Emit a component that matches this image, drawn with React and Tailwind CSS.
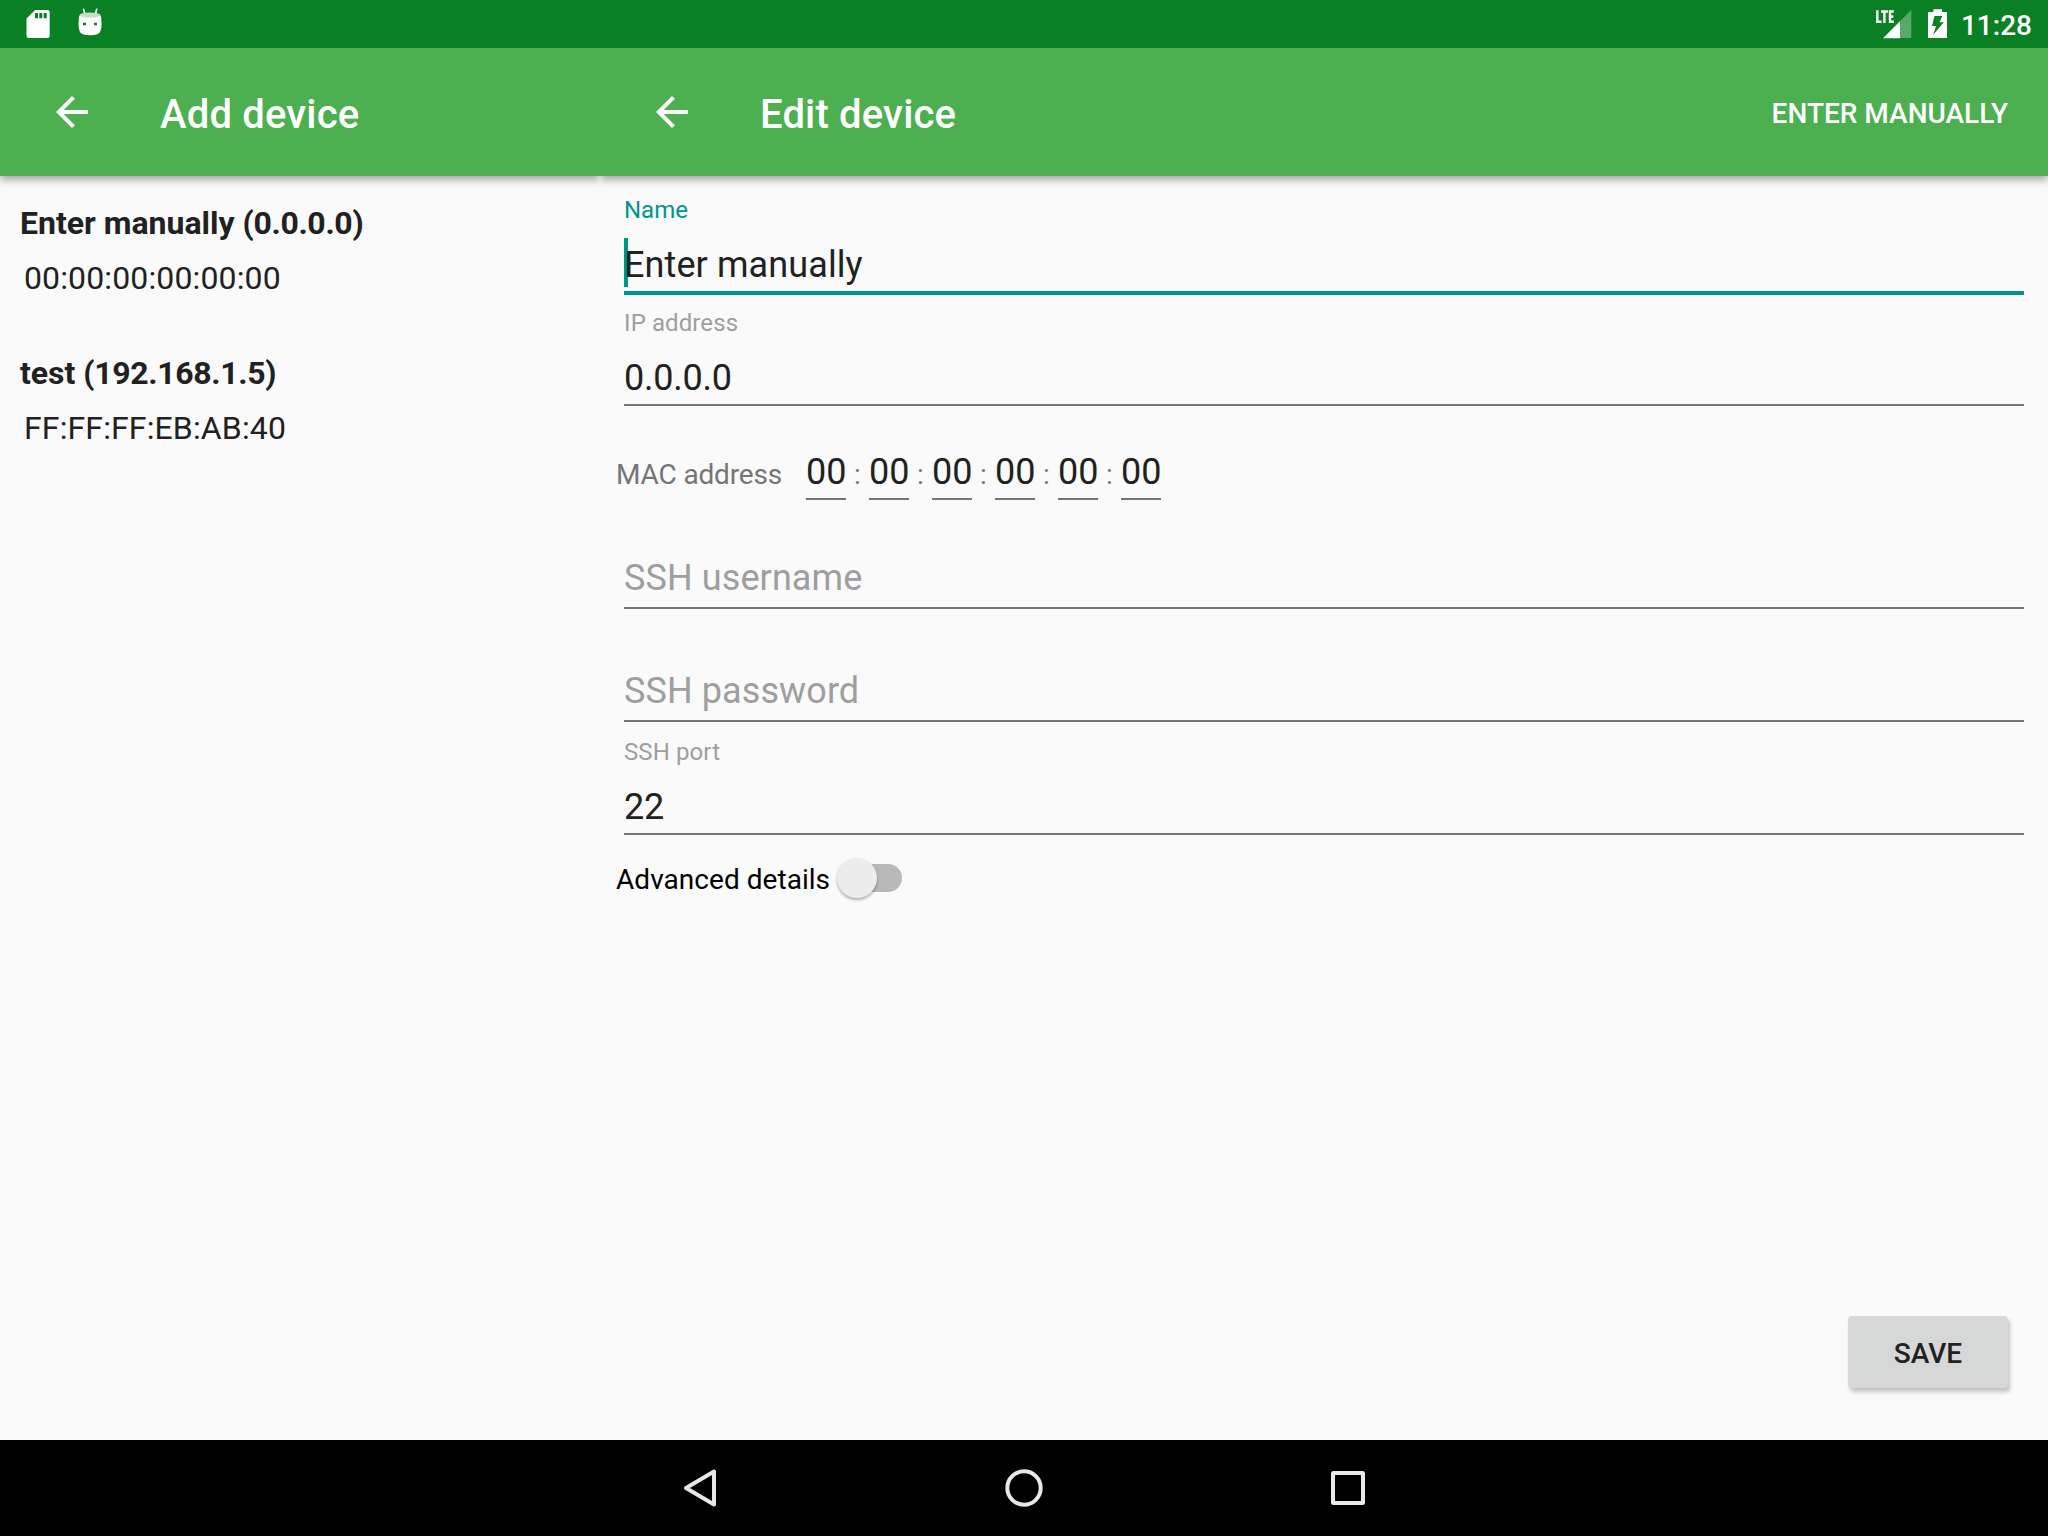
function BackArrow() {
  return (
    <svg className="size-12 shrink-0" viewBox="0 0 24 24" fill="white">
      <path d="M20 11H7.83l5.59-5.59L12 4l-8 8 8 8 1.41-1.41L7.83 13H20v-2z" />
    </svg>
  );
}

function StatusBar() {
  return (
    <div className="flex h-12 shrink-0 items-start bg-[#098024]">
      <svg className="h-12 w-[110px]" viewBox="0 0 110 48">
        <path
          fill="white"
          fillRule="evenodd"
          d="M35.2 10H47.5Q49.7 10 49.7 12.2V35.7Q49.7 38 47.5 38H28.8Q26.5 38 26.5 35.7V18.6ZM35 13V18.3H38V13ZM39.3 13V18.3H42.3V13ZM43.7 13V18.3H46.7V13Z"
        />
        <path d="M83.6 9.3L85 14.5M96.700 9.300L95.300 14.500" stroke="white" strokeWidth="1.7" strokeLinecap="round" />
        <path
          fill="white"
          fillRule="evenodd"
          d="M79.300 15.500H100.700Q101.600 19 101.600 24Q101.600 28.500 100.300 31.500Q99.200 35.200 90 35.200Q81 35.200 79.700 31.500Q78.500 28.500 78.500 24Q78.500 19 79.300 15.500ZM83 22.700V25.300H86V22.700ZM94 22.700V25.300H97V22.700Z"
        />
        <ellipse cx="90" cy="15.100" rx="10.500" ry="2.700" fill="#bfe0c5" />
      </svg>
      <div className="ml-auto flex">
        <svg className="mr-px h-12 w-[88px]" viewBox="1872 0 88 48">
          <path
            d="M1877.300 10.300V21.800H1881.500M1881 11.500H1888M1884.400 11.300V23M1893.800 11.500H1890V21.800H1893.800M1890 16.500H1893.300"
            fill="none"
            stroke="white"
            strokeWidth="2.4"
          />
          <path d="M1911.300 10V38H1900V21.300Z" fill="#58a86a" />
          <path d="M1900 21.300V38.300H1883Z" fill="white" />
          <path
            fill="white"
            fillRule="evenodd"
            d="M1933.300 9.300H1942V12H1947V38H1928V12H1933.300ZM1934.500 16L1932 26H1936.200L1933 35L1943.800 22.300H1939.500L1942.300 16Z"
          />
        </svg>
        <span className="mr-4 mt-[9px] text-[28px] font-medium leading-[33px] text-white">11:28</span>
      </div>
    </div>
  );
}

function Toolbar({ title, action }) {
  return (
    <header className="flex h-32 shrink-0 items-center bg-[#4caf50] pl-12 pr-10 text-white shadow-[0_4px_8px_rgba(0,0,0,0.34)]">
      <BackArrow />
      <h1 className="ml-16 mt-1 text-[40px] font-medium leading-[47px] tracking-[0.17px]">{title}</h1>
      {action && <button className="ml-auto mt-[3px] text-[28px] font-medium leading-[33px]">{action}</button>}
    </header>
  );
}

function Device({ name, ip, mac }) {
  return (
    <li className="h-[150px] pl-5 text-[32px] leading-[38px] text-[#212121]">
      <div className="font-bold">
        {name} <span className="tracking-[-0.33px]">({ip})</span>
      </div>
      <div className="ml-1 mt-[17px] tracking-[0.13px]">{mac}</div>
    </li>
  );
}

function Field({ label, value, focused }) {
  return (
    <div className="h-[113px] shrink-0 px-6">
      <div className={focused ? "text-[24px] leading-[28px] text-[#009688]" : "text-[24px] leading-[28px] tracking-[0.1px] text-[#9e9e9e]"}>
        {label}
      </div>
      <div className="relative mt-5 text-[36px] leading-[42px] text-[#212121]">
        {focused && <span className="absolute left-0 top-[-6px] h-[49px] w-1 bg-[#009688]" />}
        <span className={focused ? "relative tracking-[0.1px]" : "tracking-[-0.25px]"}>{value}</span>
      </div>
      <div className={focused ? "mt-[5px] h-1 bg-[#009688]" : "mt-[5px] h-0.5 bg-[#757575]"} />
    </div>
  );
}

function HintField({ hint }) {
  return (
    <div className="px-6 pt-[57px]">
      <div className="text-[36px] leading-[42px] tracking-[0.1px] text-[#9e9e9e]">{hint}</div>
      <div className="mt-2 h-0.5 bg-[#757575]" />
    </div>
  );
}

function MacRow() {
  return (
    <div className="mt-[29px] flex items-start pl-4 text-[28px] leading-[33px] text-[#757575]">
      <span className="mt-[7px] w-[190px] tracking-[-0.15px]">MAC address</span>
      {[0, 1, 2, 3, 4, 5].map((i) => (
        <div key={i} className="flex">
          {i > 0 && <span className="mt-[7px] w-[23px] text-center">:</span>}
          <div className="w-10">
            <div className="text-[36px] leading-[42px] text-[#212121]">00</div>
            <div className="mt-[5px] h-0.5 bg-[#757575]" />
          </div>
        </div>
      ))}
    </div>
  );
}

function Switch() {
  return (
    <div className="relative mt-[7px] h-10 w-[65px]">
      <div className="absolute left-[9px] top-1.5 h-7 w-14 rounded-full bg-[#b9b9b9]" />
      <div className="absolute left-0 top-0 size-10 rounded-full bg-[#ececec] shadow-[0_2px_3px_rgba(0,0,0,0.3)]" />
    </div>
  );
}

export default function App() {
  return (
    <div className="flex h-[1536px] w-[2048px] flex-col overflow-hidden bg-[#fafafa] font-['Roboto',sans-serif]">
      <StatusBar />
      <div className="flex min-h-0 flex-1">
        <section className="flex w-[600px] flex-col overflow-hidden">
          <Toolbar title="Add device" />
          <ul className="pt-7">
            <Device name="Enter manually" ip="0.0.0.0" mac="00:00:00:00:00:00" />
            <Device name="test" ip="192.168.1.5" mac="FF:FF:FF:EB:AB:40" />
          </ul>
        </section>
        <section className="flex flex-1 flex-col overflow-hidden">
          <Toolbar title="Edit device" action="ENTER MANUALLY" />
          <form className="flex flex-1 flex-col pt-5">
            <Field label="Name" value="Enter manually" focused />
            <Field label="IP address" value="0.0.0.0" />
            <MacRow />
            <div className="mb-4 flex flex-col gap-1">
              <HintField hint="SSH username" />
              <HintField hint="SSH password" />
            </div>
            <Field label="SSH port" value="22" />
            <div className="flex items-start pl-4">
              <span className="mt-3 w-[221px] text-[28px] leading-[33px] tracking-[0.04px] text-black">Advanced details</span>
              <Switch />
            </div>
            <button
              type="button"
              className="mb-[52px] mr-10 mt-auto flex h-[72px] w-40 items-center justify-center self-end rounded bg-[#d6d7d7] pt-0.5 text-[28px] font-medium leading-[33px] text-[#212121] shadow-[2px_4px_4px_rgba(0,0,0,0.22)]"
            >
              SAVE
            </button>
          </form>
        </section>
      </div>
      <nav className="flex h-24 shrink-0 items-center justify-center bg-black">
        <svg className="h-24 w-[700px]" viewBox="674 0 700 96" fill="none" stroke="#e8e8e8" strokeWidth="4" strokeLinejoin="round">
          <path d="M714 31.500V64.500L686 48Z" />
          <circle cx="1024" cy="48" r="16.700" />
          <rect x="1333" y="33" width="30" height="30" rx="0.500" />
        </svg>
      </nav>
    </div>
  );
}
